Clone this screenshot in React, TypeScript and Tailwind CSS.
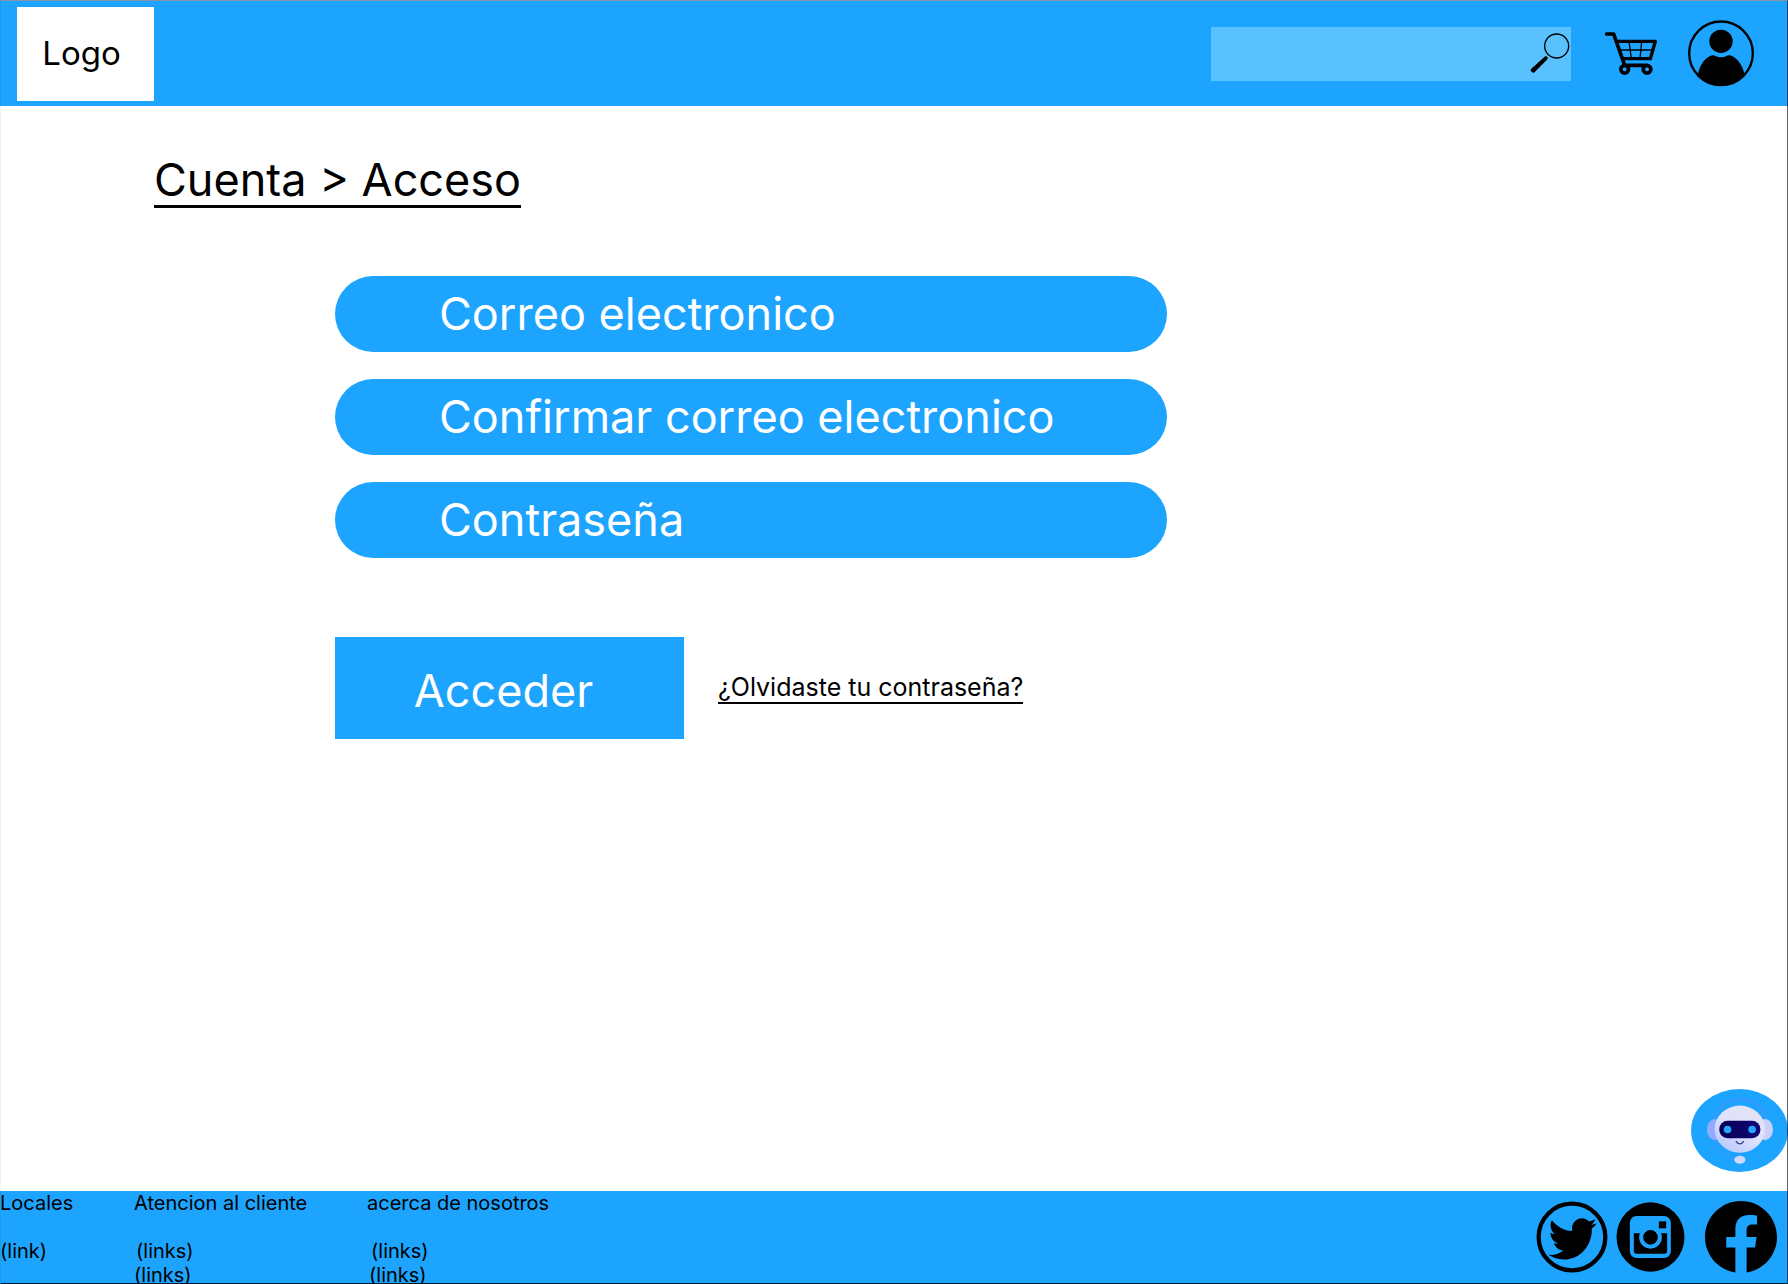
import React from "react";

function SearchIcon() {
  return (
    <svg viewBox="90 97 120 120" className="h-10 w-10" aria-hidden="true">
      <circle cx="170" cy="136" r="36" fill="none" stroke="#000" strokeWidth="4" />
      <path d="M138 166 L144 171 L141 177 L102 216 Q98 218 92 210 Q91 207 94 204 L134 168 Z" fill="#000" />
    </svg>
  );
}

function CartIcon() {
  return (
    <svg viewBox="315 97 156 129" className="h-[43px] w-[52px]" fill="none" stroke="#000" aria-hidden="true">
      <path d="M320 103 H341 L374 197 H441" strokeWidth="11" strokeLinecap="round" strokeLinejoin="round" />
      <path d="M349 125 H466 L451 177 H368" strokeWidth="10" strokeLinejoin="round" />
      <path d="M356 151 H458 M387 125 L394 177 M425 125 L420 177" strokeWidth="4" />
      <circle cx="374" cy="209" r="11.500" strokeWidth="11" />
      <circle cx="441" cy="209" r="11.500" strokeWidth="11" />
    </svg>
  );
}

function UserIcon() {
  return (
    <svg viewBox="564 60 198 201" className="h-[67px] w-[66px]" aria-hidden="true">
      <circle cx="663" cy="160" r="95.500" fill="none" stroke="#000" strokeWidth="7" />
      <circle cx="663" cy="124" r="35" fill="#000" />
      <path d="M594 223 C599 192 618 171 637 166 Q641 165 645 167 Q663 176 681 167 Q685 165 689 166 C708 171 728 192 733 223 Q705 258 663 258 Q621 258 594 223 Z" fill="#000" />
    </svg>
  );
}

function TwitterIcon() {
  return (
    <svg viewBox="48 63 216 218" className="h-[72px] w-[72px]" aria-hidden="true">
      <circle cx="156" cy="172" r="101" fill="none" stroke="#000" strokeWidth="13" />
      <path
        transform="translate(85 101) scale(.285 .3)"
        d="M459.37 151.716c.325 4.548.325 9.097.325 13.645 0 138.72-105.583 298.558-298.558 298.558-59.452 0-114.68-17.219-161.137-47.106 8.447.974 16.568 1.299 25.34 1.299 49.055 0 94.213-16.568 130.274-44.832-46.132-.975-84.792-31.188-98.112-72.772 6.498.974 12.995 1.624 19.818 1.624 9.421 0 18.843-1.3 27.614-3.573-48.081-9.747-84.143-51.98-84.143-102.985v-1.299c13.969 7.797 30.214 12.67 47.431 13.319-28.264-18.843-46.781-51.005-46.781-87.391 0-19.492 5.197-37.36 14.294-52.954 51.655 63.675 129.3 105.258 216.365 109.807-1.624-7.797-2.599-15.918-2.599-24.04 0-57.828 46.782-104.934 104.934-104.934 30.213 0 57.502 12.67 76.67 33.137 23.715-4.548 46.456-13.32 66.599-25.34-7.798 24.366-24.366 44.833-46.132 57.827 21.117-2.273 41.584-8.122 60.426-16.243-14.292 20.791-32.161 39.308-52.628 54.253z"
      />
    </svg>
  );
}

function InstagramIcon() {
  return (
    <svg viewBox="290 66 206 210" className="h-[70px] w-[69px]" aria-hidden="true">
      <ellipse cx="393" cy="171" rx="102" ry="104" fill="#000" />
      <rect x="331" y="108" width="123" height="126" rx="20" fill="#1ca4ff" />
      <path d="M343 160 H443 V213 Q443 221 435 221 H351 Q343 221 343 213 Z" fill="#000" />
      <rect x="418" y="124" width="22" height="21" fill="#000" />
      <circle cx="393" cy="172" r="28" fill="#000" stroke="#1ca4ff" strokeWidth="12" />
    </svg>
  );
}

function FacebookIcon() {
  return (
    <svg viewBox="8 8 496 496" className="h-[72px] w-[72px]" aria-hidden="true">
      <path d="M504 256C504 119 393 8 256 8S8 119 8 256c0 123.78 90.69 226.38 209.25 245V327.69h-63V256h63v-54.64c0-62.15 37-96.48 93.67-96.48 27.14 0 55.52 4.84 55.52 4.84v61h-31.28c-30.8 0-40.41 19.12-40.41 38.73V256h68.78l-11 71.69h-57.78V501C413.31 482.38 504 379.78 504 256z" />
    </svg>
  );
}

function BotIcon() {
  return (
    <svg viewBox="62 55 292 250" className="h-[83px] w-[97px]" aria-hidden="true">
      <defs>
        <linearGradient id="bot-head" x1="0.800" y1="0.100" x2="0.200" y2="0.900">
          <stop offset="0" stopColor="#e4e2f5" />
          <stop offset="0.500" stopColor="#dfe2fc" />
          <stop offset="1" stopColor="#bccbff" />
        </linearGradient>
        <linearGradient id="bot-visor" x1="0" y1="0" x2="1" y2="0">
          <stop offset="0" stopColor="#08004f" />
          <stop offset="1" stopColor="#10067a" />
        </linearGradient>
      </defs>
      <ellipse cx="208" cy="180" rx="146" ry="125" fill="#1ca4ff" />
      <path d="M131 150 C145 65 273 65 290 150" fill="none" stroke="#3f97f8" strokeWidth="6" />
      <path d="M131 205 Q145 254 194 266" fill="none" stroke="#3f97f8" strokeWidth="4" />
      <ellipse cx="134" cy="177" rx="24" ry="32" fill="#92abff" />
      <ellipse cx="285" cy="177" rx="24" ry="32" fill="#c9d0fb" />
      <ellipse cx="209" cy="176" rx="76" ry="71" fill="url(#bot-head)" />
      <rect x="147" y="151" width="124" height="52" rx="25" fill="url(#bot-visor)" />
      <circle cx="172" cy="177" r="11.500" fill="#25a5fb" />
      <circle cx="246" cy="177" r="11.500" fill="#25a5fb" />
      <path d="M197 212 Q209 229 221 212" fill="none" stroke="#33337f" strokeWidth="4" />
      <ellipse cx="209" cy="268" rx="17" ry="12" fill="#cfd8fd" />
    </svg>
  );
}

const fields = [
  { id: "correo", label: "Correo electronico", type: "email" },
  { id: "confirmar", label: "Confirmar correo electronico", type: "email" },
  { id: "clave", label: "Contraseña", type: "password" },
];

function Header() {
  return (
    <header className="flex h-[106px] items-center bg-[#1ca4ff] pr-[34px] pl-[17px]">
      <a href="#" className="mt-0.5 flex h-[94px] w-[137px] items-center justify-center bg-white pr-2 pb-0.5 text-[33px] leading-none">
        Logo
      </a>
      <form role="search" className="mt-0.5 ml-auto flex h-[54px] w-[360px] items-center bg-[#5ac1ff]">
        <input type="search" aria-label="Buscar" className="h-full min-w-0 flex-1 bg-transparent px-4 text-2xl outline-none" />
        <button type="submit" aria-label="Buscar" className="mr-px mb-0.5">
          <SearchIcon />
        </button>
      </form>
      <a href="#" aria-label="Carrito" className="ml-[34px]">
        <CartIcon />
      </a>
      <a href="#" aria-label="Cuenta" className="ml-[31px]">
        <UserIcon />
      </a>
    </header>
  );
}

function Footer() {
  return (
    <footer className="flex h-[93px] items-start justify-between overflow-hidden bg-[#1ca4ff] text-[20px] leading-6">
      <nav className="flex">
        <div className="w-[134px]">
          <h2>Locales</h2>
          <a href="#" className="mt-6 block">(link)</a>
        </div>
        <div className="w-[233px]">
          <h2>Atencion al cliente</h2>
          <a href="#" className="mt-6 block pl-0.5">(links)</a>
          <a href="#" className="block">(links)</a>
        </div>
        <div>
          <h2>acerca de nosotros</h2>
          <a href="#" className="mt-6 block pl-1">(links)</a>
          <a href="#" className="block pl-0.5">(links)</a>
        </div>
      </nav>
      <div className="flex items-center pt-2.5 pr-[11px]">
        <a href="#" aria-label="Twitter"><TwitterIcon /></a>
        <a href="#" aria-label="Instagram" className="ml-2"><InstagramIcon /></a>
        <a href="#" aria-label="Facebook" className="ml-5"><FacebookIcon /></a>
      </div>
    </footer>
  );
}

export default function App() {
  return (
    <div className="relative flex min-h-screen flex-col bg-white font-['Inter',sans-serif] text-black">
      <Header />
      <main className="relative flex-1 pl-[154px]">
        <h1 className="mt-12 w-fit border-b-[3px] border-black text-[45px] leading-[51px]">
          Cuenta &gt; Acceso
        </h1>
        <form className="mt-[68px] ml-[181px]">
          <div className="flex max-w-[832px] flex-col gap-[27px]">
            {fields.map((f) => (
              <input
                key={f.id}
                id={f.id}
                type={f.type}
                aria-label={f.label}
                placeholder={f.label}
                className="h-[76px] w-full rounded-full bg-[#1ca4ff] pr-8 pb-0.5 pl-[104px] text-[45px] text-white outline-none placeholder:text-white placeholder:opacity-100"
              />
            ))}
          </div>
          <div className="mt-[79px] flex items-center gap-[34px]">
            <button type="submit" className="h-[102px] w-[349px] bg-[#1ca4ff] pt-1 pr-3 text-[45px] leading-none text-white">
              Acceder
            </button>
            <a href="#" className="border-b-2 border-black text-[25px] leading-[30px]">
              ¿Olvidaste tu contraseña?
            </a>
          </div>
        </form>
        <button type="button" aria-label="Asistente virtual" className="absolute right-0 bottom-[19px]">
          <BotIcon />
        </button>
      </main>
      <Footer />
      <div className="pointer-events-none absolute inset-0 border border-t-[#8894a8] border-r-black/60 border-b-[#0a1a2a] border-l-black/5" />
    </div>
  );
}
